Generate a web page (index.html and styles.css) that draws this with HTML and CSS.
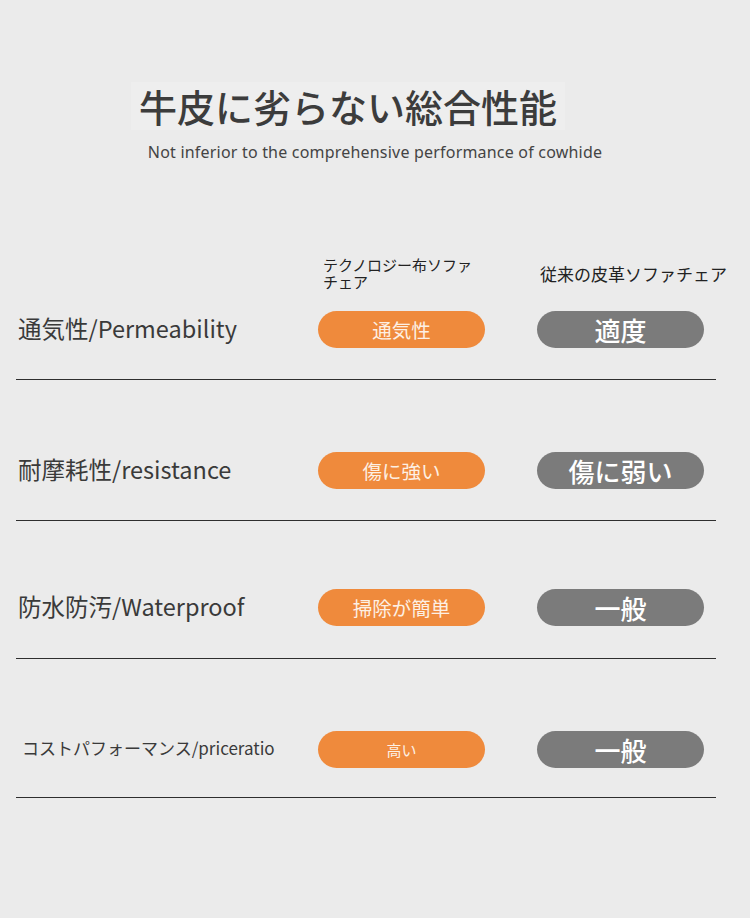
FILE: index.html
```html
<!DOCTYPE html>
<html lang="ja">
<head>
<meta charset="utf-8">
<link rel="stylesheet" href="styles.css">
</head>
<body>
<div class="page">
  <header class="hero">
    <h1 class="title">牛皮に劣らない総合性能</h1>
    <p class="subtitle">Not inferior to the comprehensive performance of cowhide</p>
  </header>

  <section class="compare">
    <div class="head">
      <div></div>
      <div class="col-head col-a">テクノロジー布ソファチェア</div>
      <div class="col-head col-b">従来の皮革ソファチェア</div>
    </div>

    <div class="row row-first">
      <div class="label">通気性/Permeability</div>
      <div class="pill pill-orange">通気性</div>
      <div class="pill pill-grey">適度</div>
    </div>
    <div class="rule"></div>

    <div class="row">
      <div class="label">耐摩耗性/resistance</div>
      <div class="pill pill-orange">傷に強い</div>
      <div class="pill pill-grey">傷に弱い</div>
    </div>
    <div class="rule"></div>

    <div class="row row-tight">
      <div class="label">防水防汚/Waterproof</div>
      <div class="pill pill-orange">掃除が簡単</div>
      <div class="pill pill-grey">一般</div>
    </div>
    <div class="rule rule-mid"></div>

    <div class="row">
      <div class="label label-small">コストパフォーマンス/priceratio</div>
      <div class="pill pill-orange pill-small">高い</div>
      <div class="pill pill-grey">一般</div>
    </div>
    <div class="rule rule-last"></div>
  </section>
</div>
</body>
</html>
```

FILE: styles.css
```css
* { box-sizing: border-box; }
html, body {
  margin: 0;
  padding: 0;
  background: #ebebeb;
}
body {
  font-family: "Noto Sans CJK JP", "Noto Sans", sans-serif;
  color: #3a3a3a;
}
.page {
  width: 750px;
  height: 918px;
  overflow: hidden;
}
.hero {
  padding-top: 82px;
  display: flex;
  flex-direction: column;
  align-items: center;
}
.title {
  margin: 0 0 0 -54px;
  font-size: 38px;
  line-height: 48px;
  font-weight: 500;
  color: #3c3c3c;
  background: #eeeeee;
  padding: 0 8px;
}
.subtitle {
  margin: 12px 0 0 0;
  font-family: "Noto Sans", sans-serif;
  font-size: 16px;
  line-height: 20px;
  letter-spacing: 0.2px;
  color: #444;
}
.compare {
  margin-top: 92px;
}
.head, .row {
  display: grid;
  grid-template-columns: 248px 167px 167px;
  column-gap: 52px;
  padding-left: 18px;
}
.head {
  align-items: center;
  height: 38px;
}
.col-head {
  font-size: 15px;
  line-height: 17px;
  color: #222;
}
.col-a {
  padding-left: 5px;
  width: 160px;
}
.col-b {
  padding-left: 3px;
  font-size: 17px;
  white-space: nowrap;
}
.row {
  align-items: center;
  padding-top: 72px;
}
.row-first {
  padding-top: 19px;
}
.row-tight {
  padding-top: 68px;
}
.label {
  font-size: 23.5px;
  line-height: 30px;
  padding-bottom: 4px;
  color: #3a3a3a;
  white-space: nowrap;
  min-width: 0;
}
.label-small {
  font-size: 17px;
  padding-left: 4px;
}
.pill {
  height: 37px;
  border-radius: 19px;
  display: flex;
  align-items: center;
  justify-content: center;
  white-space: nowrap;
}
.pill-orange {
  background: #ef8a3c;
  color: #fdf0e4;
  font-size: 19.5px;
}
.pill-small {
  font-size: 15px;
}
.pill-grey {
  background: #7b7b7b;
  color: #ffffff;
  font-size: 26px;
  font-weight: 500;
}
.rule {
  margin: 31px 0 0 16px;
  width: 700px;
  height: 1px;
  background: #2e2e2e;
}
.rule-mid {
  margin-top: 32px;
}
.rule-last {
  margin-top: 29px;
}
```
